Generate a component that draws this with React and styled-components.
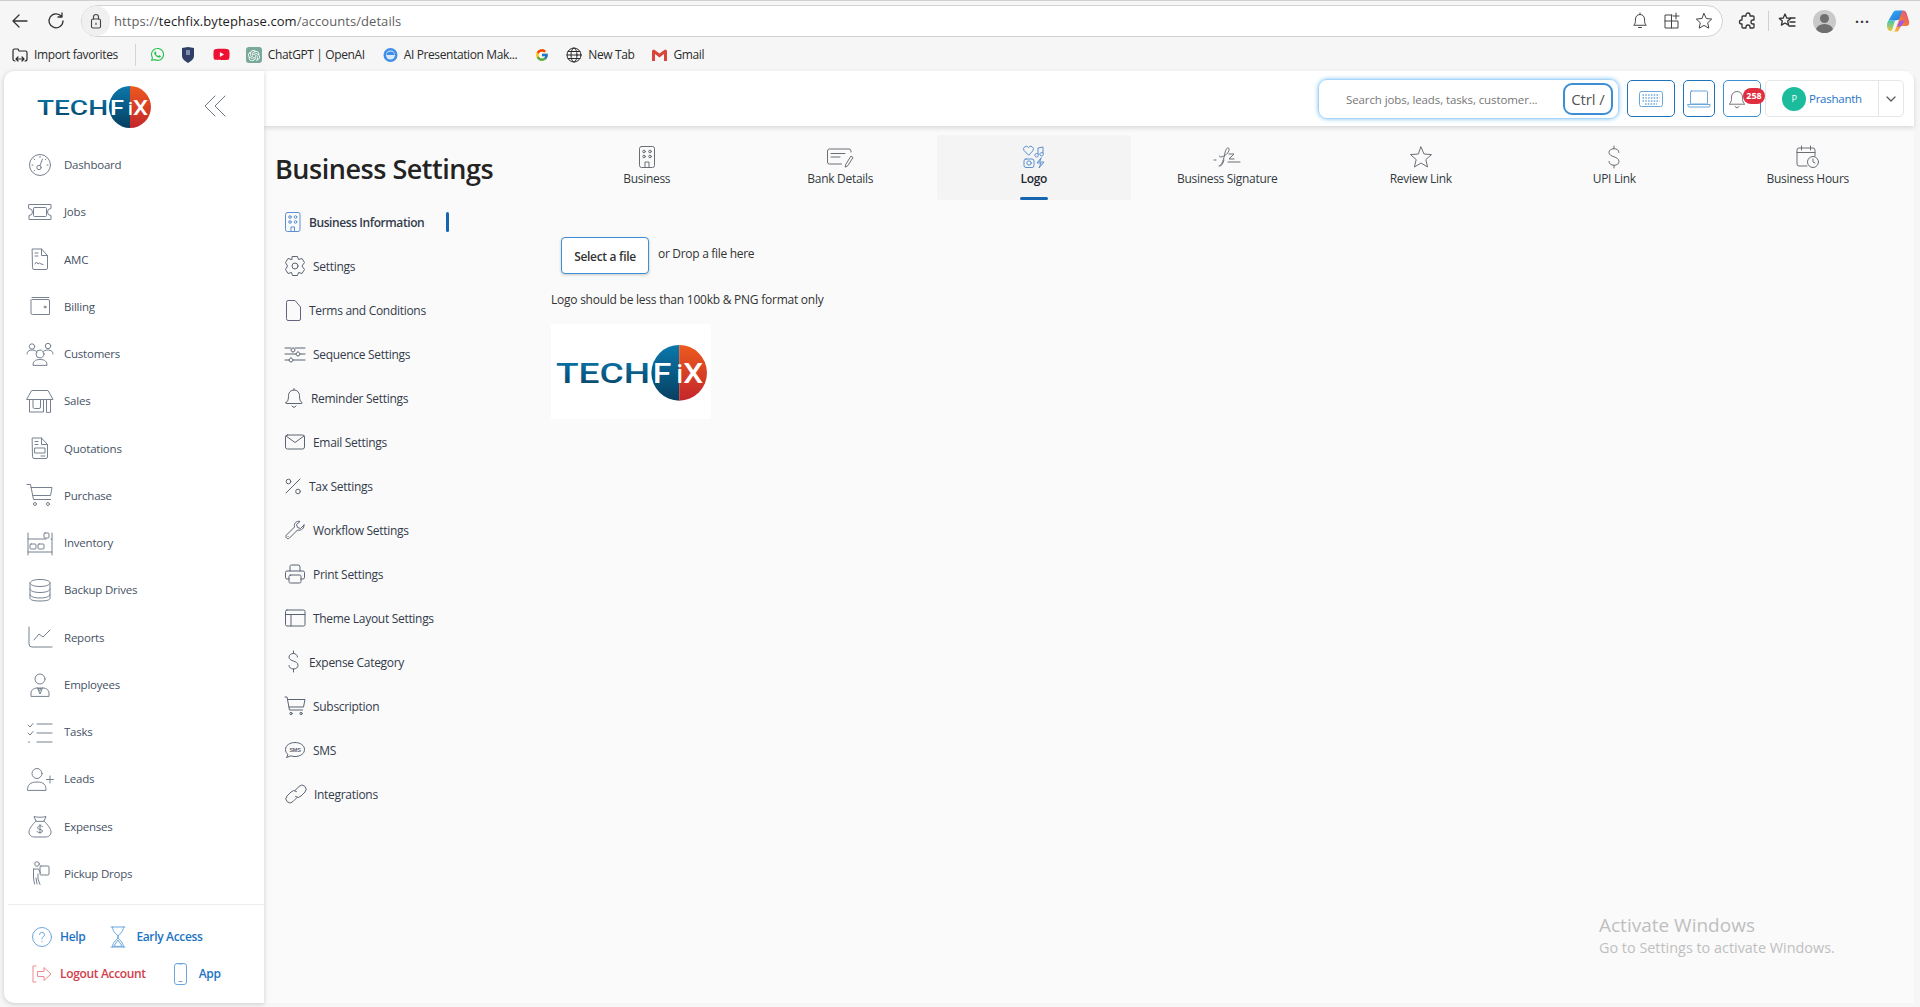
import React from "react";
import styled, { createGlobalStyle } from "styled-components";
import { FaWhatsapp, FaYoutube } from "react-icons/fa";
import { FcGoogle } from "react-icons/fc";
import { SiOpenai } from "react-icons/si";

const GlobalStyle = createGlobalStyle`
  html, body { margin: 0; padding: 0; background: #f6f6f6; }
  body { font-family: "Open Sans", "Noto Sans", sans-serif; overflow: hidden; }
  * { box-sizing: border-box; }
`;

const Page = styled.div`
  position: relative;
  width: 1920px;
  height: 1007px;
  display: flex;
  flex-direction: column;
  background: #f6f6f6;
`;

/* browser chrome */
const Chrome = styled.div`
  height: 71px;
  flex: none;
  border-top: 1px solid #cfcfcf;
  display: flex;
  flex-direction: column;
`;

const ToolRow = styled.div`
  height: 39px;
  flex: none;
  display: flex;
  align-items: center;
  padding: 1px 0 0 2px;
`;

const NavBtn = styled.div`
  width: 36px;
  display: flex;
  justify-content: center;
  color: #333;
`;

const AddressBar = styled.div`
  width: 1642px;
  height: 32px;
  margin-left: 7px;
  background: #fff;
  border: 1px solid #d2d2d2;
  border-radius: 16px;
  display: flex;
  align-items: center;
`;

const LockWrap = styled.div`
  width: 28px;
  height: 30px;
  border-radius: 15px;
  background: #f0f0f0;
  color: #444;
  display: flex;
  align-items: center;
  justify-content: center;
  margin-right: 4px;
`;

const Url = styled.span`
  font-size: 13px;
  letter-spacing: 0.06px;
  color: #5f5f5f;
  b { font-weight: 400; color: #1d1d1d; }
`;

const AddressIcons = styled.div`
  margin-left: auto;
  display: flex;
  gap: 14px;
  padding-right: 9px;
  color: #444;
`;

const RightIcons = styled.div`
  display: flex;
  align-items: center;
  color: #333;
  margin-left: 16px;
`;

const ToolSep = styled.div`
  width: 1px;
  height: 20px;
  background: #d0d0d0;
  margin: 0 9px 0 11px;
`;

const ProfileDot = styled.div`
  width: 23px;
  height: 23px;
  border-radius: 50%;
  background: #c9c9c9;
  margin: 0 19px 0 17px;
  position: relative;
  overflow: hidden;
  &::before {
    content: "";
    position: absolute;
    left: 7px;
    top: 4px;
    width: 9px;
    height: 9px;
    border-radius: 50%;
    background: #6f6f6f;
  }
  &::after {
    content: "";
    position: absolute;
    left: 3px;
    top: 14px;
    width: 17px;
    height: 12px;
    border-radius: 50%;
    background: #6f6f6f;
  }
`;

const Dots = styled.span`
  width: 16px;
  font-size: 14px;
  font-weight: 700;
  letter-spacing: 1px;
  line-height: 8px;
  height: 14px;
  margin-right: 15px;
  color: #333;
`;

const BookmarkRow = styled.div`
  height: 29px;
  flex: none;
  display: flex;
  align-items: center;
  padding-left: 12px;
`;

const Bookmark = styled.div`
  display: flex;
  align-items: center;
  gap: 6px;
  font-size: 12px;
  letter-spacing: -0.38px;
  color: #2b2b2b;
  margin-right: ${(p) => p.$mr ?? 18}px;
`;

const BookmarkSep = styled.div`
  width: 1px;
  height: 22px;
  background: #d4d4d4;
  margin: 0 14px 0 0;
`;

/* app shell */
const Shell = styled.div`
  height: 932px;
  display: flex;
  padding: 0 6px 0 4px;
`;

const Sidebar = styled.aside`
  width: 260px;
  flex: none;
  background: #fff;
  border-radius: 10px 0 0 10px;
  box-shadow: 0 1px 5px rgba(0, 0, 0, 0.18);
  display: flex;
  flex-direction: column;
  position: relative;
  z-index: 2;
`;

const LogoRow = styled.div`
  height: 70px;
  flex: none;
  display: flex;
  align-items: center;
  padding: 2px 0 0 33px;
`;

const Collapse = styled.div`
  margin: -3px 0 0 53px;
  color: #6b7785;
  display: flex;
`;

const NavList = styled.nav`
  display: flex;
  flex-direction: column;
  padding-left: 22px;
`;

const NavItem = styled.div`
  height: 47.25px;
  display: flex;
  align-items: center;
  gap: 10px;
  font-size: 11.5px;
  letter-spacing: -0.22px;
  color: #465265;
`;

const IconBox = styled.span`
  width: ${(p) => p.$w || 28}px;
  height: ${(p) => p.$h || 24}px;
  flex: none;
  display: flex;
  align-items: center;
  justify-content: center;
  color: ${(p) => p.$color || "inherit"};
`;

const SideFooter = styled.div`
  margin: 7px 0 0 4px;
  border-top: 1px solid #ececec;
  padding: 19px 0 0 24px;
  display: flex;
  flex-direction: column;
  gap: 12px;
`;

const FooterRow = styled.div`
  display: flex;
  align-items: center;
  gap: ${(p) => p.$gap}px;
  height: 25px;
`;

const FooterLink = styled.div`
  display: flex;
  align-items: center;
  gap: ${(p) => p.$gap || 8}px;
  font-size: 12px;
  font-weight: 600;
  letter-spacing: -0.34px;
  color: ${(p) => (p.$danger ? "#d2404b" : "#1b73c4")};
`;

const Main = styled.main`
  flex: 1;
  background: #fafafa;
  display: flex;
  flex-direction: column;
  min-width: 0;
`;

const Header = styled.header`
  height: 55px;
  flex: none;
  background: #fff;
  border-radius: 0 10px 0 0;
  box-shadow: 0 2px 5px rgba(0, 0, 0, 0.14);
  display: flex;
  align-items: flex-start;
  justify-content: flex-end;
  padding: 8px 10px 0 0;
  position: relative;
  z-index: 1;
`;

const SearchBox = styled.div`
  width: 301px;
  height: 40px;
  border: 1px solid #a8d5f7;
  box-shadow: 0 0 4px #7fc3f5;
  border-radius: 9px;
  display: flex;
  align-items: center;
  justify-content: space-between;
  padding: 0 5px 0 27px;
  margin-right: 8px;
  font-size: 11.5px;
  letter-spacing: -0.1px;
  color: #777;
`;

const CtrlKey = styled.div`
  width: 50px;
  height: 32px;
  border: 2px solid #3c8fd4;
  border-radius: 9px;
  display: flex;
  align-items: center;
  justify-content: center;
  font-size: 15px;
  color: #555;
`;

const HeadBtn = styled.div`
  position: relative;
  width: ${(p) => p.$w}px;
  height: 37px;
  margin: 1px 8px 0 0;
  border: 1px solid ${(p) => p.$line || "#1f72b8"};
  border-radius: 5px;
  display: flex;
  align-items: center;
  justify-content: center;
  color: ${(p) => p.$icon || "#6ba6da"};
`;

const BellGlyph = styled.span`
  display: flex;
  margin-right: 10px;
`;

const Badge = styled.span`
  position: absolute;
  left: 19px;
  top: 7px;
  width: 22px;
  height: 16px;
  border-radius: 8px;
  background: #df2e3f;
  color: #fff;
  font-size: 9px;
  font-weight: 700;
  line-height: 16px;
  text-align: center;
`;

const UserBox = styled.div`
  width: 139px;
  height: 37px;
  margin: 1px 0 0 -4px;
  border: 1px solid #e6e6e6;
  border-radius: 5px;
  display: flex;
  align-items: center;
`;

const UserName = styled.div`
  width: 113px;
  height: 100%;
  display: flex;
  align-items: center;
  gap: 3px;
  padding-left: 16px;
  font-size: 11.5px;
  letter-spacing: -0.25px;
  color: #1f73c5;
  border-right: 1px solid #e6e6e6;
`;

const Avatar = styled.span`
  width: 24px;
  height: 24px;
  border-radius: 50%;
  background: #1abc9c;
  color: #fff;
  font-size: 9px;
  display: flex;
  align-items: center;
  justify-content: center;
`;

const Chevron = styled.div`
  flex: 1;
  display: flex;
  justify-content: center;
  color: #555;
`;

const Body = styled.div`
  flex: 1;
  display: flex;
  min-height: 0;
`;

const SettingsCol = styled.div`
  width: 286px;
  flex: none;
  padding: 24px 0 0 11px;
`;

const Title = styled.h1`
  margin: 0 0 12px;
  font-size: 27px;
  line-height: 38px;
  font-weight: 600;
  letter-spacing: -0.47px;
  color: #232323;
`;

const SettingsList = styled.div`
  display: flex;
  flex-direction: column;
`;

const SettingsItem = styled.div`
  height: 44px;
  width: 174px;
  padding-left: ${(p) => p.$pl ?? 10}px;
  display: flex;
  align-items: center;
  gap: 8px;
  font-size: 12px;
  letter-spacing: ${(p) => (p.$active ? "-0.42px" : "-0.3px")};
  white-space: nowrap;
  font-weight: ${(p) => (p.$active ? 600 : 400)};
  color: #333a4a;
`;

const ActiveBar = styled.span`
  margin-left: auto;
  width: 3px;
  height: 20px;
  border-radius: 2px;
  background: #1565b0;
`;

const Content = styled.section`
  flex: 1;
  min-width: 0;
  padding-top: 9px;
`;

const Tabs = styled.div`
  display: grid;
  grid-template-columns: repeat(7, 193.5px);
  height: 65px;
`;

const Tab = styled.div`
  position: relative;
  display: flex;
  flex-direction: column;
  align-items: center;
  padding-top: 11px;
  gap: 2px;
  font-size: 12px;
  letter-spacing: -0.3px;
  border-radius: 3px;
  color: ${(p) => (p.$active ? "#1f2733" : "#333a40")};
  background: ${(p) => (p.$active ? "#f4f4f4" : "transparent")};
  font-weight: ${(p) => (p.$active ? 600 : 400)};
  &::after {
    content: "";
    display: ${(p) => (p.$active ? "block" : "none")};
    position: absolute;
    bottom: 0;
    left: 50%;
    width: 28px;
    margin-left: -14px;
    height: 3px;
    border-radius: 2px;
    background: #1565b0;
  }
`;

const Panel = styled.div`
  padding: 37px 0 0 1px;
`;

const UploadRow = styled.div`
  display: flex;
  align-items: flex-start;
  padding-left: 10px;
  gap: 9px;
`;

const SelectBtn = styled.div`
  width: 88px;
  height: 37px;
  background: #fff;
  border: 1px solid #3c8fd4;
  border-radius: 4px;
  box-shadow: 0 1px 3px rgba(0, 0, 0, 0.2);
  display: flex;
  align-items: center;
  justify-content: center;
  font-size: 12px;
  font-weight: 600;
  letter-spacing: -0.3px;
  color: #333;
  padding-top: 1px;
`;

const DropText = styled.span`
  font-size: 12px;
  line-height: 33px;
  letter-spacing: -0.3px;
  color: #333;
`;

const Hint = styled.p`
  margin: 17px 0 15px;
  font-size: 12px;
  line-height: 18px;
  letter-spacing: -0.24px;
  color: #333;
`;

const LogoPreview = styled.div`
  width: 160px;
  height: 95px;
  background: #fff;
  display: flex;
  align-items: center;
  padding: 3px 0 0 5px;
`;

const Watermark = styled.div`
  position: absolute;
  left: 1599px;
  top: 912px;
  color: #bfbfbf;
  font-size: 14.4px;
  line-height: 20px;
  div:first-child {
    font-size: 19px;
    line-height: 26px;
  }
`;

const Line = styled.svg`
  fill: none;
  stroke: currentColor;
  stroke-width: ${(p) => p.$sw || 1};
  stroke-linecap: round;
  stroke-linejoin: round;
  display: block;
  overflow: visible;
`;

const Ico = ({ w = 28, h = 24, sw, dy = 0, children }) => (
  <Line width={w} height={h} viewBox={`0 ${-dy} ${w} ${h}`} $sw={sw}>
    {children}
  </Line>
);

function Logo({ width }) {
  const id = `lg${width}`;
  const font = "Roboto, Liberation Sans, sans-serif";
  return (
    <svg width={width} height={(width * 42) / 114} viewBox="0 0 114 42" style={{ display: "block", flex: "none" }}>
      <defs>
        <linearGradient id={`${id}b`} x1="0" y1="0" x2="0" y2="1">
          <stop offset="0" stopColor="#0b78ad" />
          <stop offset="1" stopColor="#063f5f" />
        </linearGradient>
        <linearGradient id={`${id}o`} x1="0" y1="0" x2="0" y2="1">
          <stop offset="0" stopColor="#ec5a1e" />
          <stop offset="1" stopColor="#c4262c" />
        </linearGradient>
      </defs>
      <path d="M93 0a21 21 0 0 0 0 42z" fill={`url(#${id}b)`} />
      <path d="M93 0a21 21 0 0 1 0 42z" fill={`url(#${id}o)`} />
      <text x="0" y="29" fontFamily={font} fontWeight="500" fontSize="21" textLength="71" lengthAdjust="spacingAndGlyphs" fill={`url(#${id}b)`}>TECH</text>
      <text x="73" y="29" fontFamily={font} fontWeight="500" fontSize="21" textLength="14" lengthAdjust="spacingAndGlyphs" fill="#fff">F</text>
      <text x="91" y="29" fontFamily={font} fontWeight="500" fontSize="19" fill="#fff">i</text>
      <text x="96" y="29" fontFamily={font} fontWeight="500" fontSize="21" textLength="15" lengthAdjust="spacingAndGlyphs" fill="#fff">X</text>
    </svg>
  );
}

function Copilot() {
  return (
    <svg width="24" height="24" viewBox="0 0 24 24">
      <defs>
        <linearGradient id="cp1" x1="0" y1="0" x2="1" y2="1">
          <stop offset="0" stopColor="#2bb5ef" />
          <stop offset="1" stopColor="#2c6fe0" />
        </linearGradient>
        <linearGradient id="cp2" x1="0" y1="1" x2="1" y2="0">
          <stop offset="0" stopColor="#f6c343" />
          <stop offset=".55" stopColor="#f0793a" />
          <stop offset="1" stopColor="#e0489a" />
        </linearGradient>
        <linearGradient id="cp3" x1="0" y1="0" x2="0" y2="1">
          <stop offset="0" stopColor="#38c9b0" />
          <stop offset="1" stopColor="#f0c83c" />
        </linearGradient>
      </defs>
      <path d="M7 3.500c1-1.500 2-2 4-2h6l-3 9-5 1H2.500z" fill="url(#cp1)" />
      <path d="M2.500 11.500H9L6.500 20c-.5 1.800-1.500 2.500-3 2C1.500 21 .8 18.500 1 16c.1-1.800.6-3.200 1.500-4.500z" fill="url(#cp3)" />
      <path d="M17 1.500c2 0 3 1 3.700 3L23 12c.8 3-.6 5-3 5h-5l-3 5.500H6.500c2 0 2.700-1 3.300-3L15 5c.5-1.500 1-2.500 2-3.500z" fill="url(#cp2)" />
      <path d="M14 11.500h5l-4 6h-4z" fill="#a855e8" />
    </svg>
  );
}

const D = {
  dashboard: <><circle cx="14" cy="12" r="10.500" /><path d="M14 3.500v1M6 12h1M21 12h1M8 6l.7.7M20 6l-.7.700M8 18l.7-.7" /><circle cx="13" cy="14.500" r="2.200" /><path d="M14 12.500l2.500-6.500" /></>,
  jobs: <><path d="M3 4.500h22v4a3.500 3.500 0 0 0 0 7v4H3v-4a3.500 3.500 0 0 0 0-7z" /><rect x="7.500" y="7.500" width="13" height="9" rx="1" /></>,
  amc: <><path d="M6.500 2h9l6 6.500V21a1.500 1.500 0 0 1-1.500 1.500H8A1.500 1.500 0 0 1 6.500 21z" /><path d="M15.500 2v6.500h6M9 6h3M9 9h3M9 17l1.500-2 1.500 2 1.500-1 1.500 1 2 .5" /></>,
  billing: <><path d="M5 5.500v13.500a1.500 1.500 0 0 0 1.500 1.500H23.500V7a1.500 1.500 0 0 0-1.500-1.500H6.500M6 3.500h17" /><circle cx="19" cy="13" r="1" /></>,
  customers: <><circle cx="14" cy="12" r="4" /><path d="M7 23c0-3.500 2-5.500 7-5.500s7 2 7 5.500z" /><circle cx="6" cy="4.500" r="2.700" /><circle cx="22" cy="4" r="2.700" /><path d="M1 12c0-2.500 2-4 5-4s4 1 5 2M27 12c0-2.500-2-4-5-4s-4 1-5 2" /></>,
  sales: <><path d="M6 1.500h16l5 9H1z" /><path d="M3.500 10.500V23h14V10.500M7 10.500v7.500a1.500 1.500 0 0 0 1.500 1.500h4.500a1.500 1.500 0 0 0 1.500-1.500v-7.500M20.500 23V10.500h4V23z" /></>,
  quote: <><path d="M6.500 2h9l6 6.500V21a1.500 1.500 0 0 1-1.500 1.500H8A1.500 1.500 0 0 1 6.500 21z" /><path d="M15.500 2v6.500h6M9 5.500h3M9 8.500h3M9 12h10v5H9zM15 20h4" /></>,
  purchase: <><path d="M1 1.500h3.500l3 15h17M5 4.500h21l-1.500 8H7" /><circle cx="9" cy="21" r="1.500" /><circle cx="22" cy="21" r="1.500" /></>,
  inventory: <><path d="M2 2v22M26 2v22M2 21h24M2 8h18M25 8h1" /><rect x="4" y="13" width="6" height="5" rx="1" /><rect x="12" y="13" width="6" height="5" rx="1" /><rect x="18" y="2" width="5" height="5" rx="1" /></>,
  backup: <><path d="M4 5c0-2 4-3.500 10-3.500S24 3 24 5v15.500c0 1.500-4 2.500-10 2.500S4 22 4 20.500z" /><path d="M4 5c0 2 4 3.500 10 3.500S24 7 24 5M4 11c0 2 4 3.500 10 3.500S24 13 24 11M4 16.500c0 2 4 3.500 10 3.500s10-1.500 10-3.500" /></>,
  reports: <><path d="M3 2v17a3 3 0 0 0 3 3h20" /><path d="M8 15l5-6 4 3 7-7" /></>,
  employees: <><circle cx="14" cy="7" r="5" /><path d="M5 24v-3c0-3 3-5 6-5h6c3 0 6 2 6 5v3zM11.500 16l2.500 6 2.500-6M12.500 16.500h3l-1.500 2z" /></>,
  tasks: <><path d="M2 5l2 2 3-3.500M2 13l2 2 3-3.500M2.500 22h1M11 4h15M11 13h15M11 22h15" /></>,
  leads: <><circle cx="11" cy="6.500" r="5" /><path d="M1.500 23c0-5 2.500-8 9.500-8s9 3 9 8zM24 9v7M20.500 12.500h7" /></>,
  expenses: <><path d="M10 7L8 2.500c3 1 9 1 12 0L18 7zM10 7C6 11 3 15 3 18c0 3 2 5 6 5h10c4 0 6-2 6-5 0-3-3-7-7-11" /><path d="M16.500 12.500c-1-1-5-1-5 1.200 0 2.300 5 1 5 3.300 0 2-4 2-5.500.7M14 10.500v9" /></>,
  pickup: <><circle cx="11" cy="3" r="2.300" /><rect x="14" y="5" width="9" height="9" rx="1" /><path d="M7.500 8h5l2 4M7.500 8v9l1 6M12 13v5l2 5.500M10 17l1 6" /></>,
};

const navItems = [
  ["Dashboard", "dashboard"], ["Jobs", "jobs"], ["AMC", "amc"], ["Billing", "billing"],
  ["Customers", "customers"], ["Sales", "sales"], ["Quotations", "quote"], ["Purchase", "purchase"],
  ["Inventory", "inventory"], ["Backup Drives", "backup"], ["Reports", "reports"], ["Employees", "employees"],
  ["Tasks", "tasks"], ["Leads", "leads"], ["Expenses", "expenses"], ["Pickup Drops", "pickup"],
];

const settingsItems = [
  { label: "Business Information", w: 16, color: "#5b8fcf", active: true, d: <><rect x=".5" y="1.500" width="14.500" height="19" rx="2" /><circle cx="5" cy="6" r="1.300" /><circle cx="10.500" cy="6" r="1.300" /><circle cx="5" cy="11" r="1.300" /><circle cx="10.500" cy="11" r="1.300" /><path d="M6 20.500V16h3.500v4.500" /></> },
  { label: "Settings", w: 20, dy: 1, d: <><path d="M7.500 .5h5l1 3 3.500-1 2.500 4-2.500 3.500 2.500 3.500-2.500 4-3.500-1-1 3h-5l-1-3-3.500 1-2.500-4L2.500 10 .5 6.500l2.500-4 3.500 1z" /><circle cx="10" cy="10" r="3" /></> },
  { label: "Terms and Conditions", w: 16, color: "#6a6080", d: <path d="M1.500 3a1.500 1.500 0 0 1 1.500-1.500H10L15.500 8v12a1.500 1.500 0 0 1-1.500 1.500H3A1.500 1.500 0 0 1 1.500 20z" /> },
  { label: "Sequence Settings", w: 20, dy: 1.500, d: <path d="M0 3.500h6M10 3.500h10M0 9.500h11M15 9.500h5M0 15.500h4M8 15.500h12M8 3.500a2 2 0 1 0 .01 0M13 7.500a2 2 0 1 0 .01 0M6 13.500a2 2 0 1 0 .01 0" /> },
  { label: "Reminder Settings", w: 18, dy: .5, d: <path d="M1 15c2-1 2.500-3 2.500-7a5.500 5.500 0 0 1 11 0c0 4 .5 6 2.500 7 .5.500 0 1-.5 1H1.500c-.5 0-1-.5-.5-1zM7 18.500l2 1.500 2-1.500M9 1V2.500" /> },
  { label: "Email Settings", w: 20, dy: 2.500, d: <><rect x=".5" y="1.500" width="19" height="14" rx="2" /><path d="M1 2.500L10 9l9-6.500" /></> },
  { label: "Tax Settings", w: 16, dy: 3, d: <><path d="M1 15L15 1" /><circle cx="3.500" cy="3.500" r="2.300" /><circle cx="13" cy="13.500" r="2.300" /></> },
  { label: "Workflow Settings", w: 20, dy: 1.500, d: <path d="M19 4.500l-3.500 3.500-3-1-1-3L15 1c-3-1-6.500 1.500-5.500 5.500L1.500 14.500c-2 2 1 5 3 3l8-8c4 1 7-2 6.500-5zM3 16h.1" /> },
  { label: "Print Settings", w: 20, dy: 1, d: <><path d="M5 7V2.500A1.500 1.500 0 0 1 6.500 1H13a2 2 0 0 1 2 2v4" /><path d="M4 15H2a1.500 1.500 0 0 1-1.500-1.500v-5A1.500 1.500 0 0 1 2 7h16a1.500 1.500 0 0 1 1.500 1.500v5A1.500 1.500 0 0 1 18 15h-2" /><rect x="4" y="11" width="12" height="8" rx="1.500" /></> },
  { label: "Theme Layout Settings", w: 20, dy: 2, d: <><rect x=".5" y="1" width="19.500" height="16" rx="1.500" /><path d="M.5 5.500h19.500M6 5.500V17" /></> },
  { label: "Expense Category", w: 16, d: <path d="M12.500 6c0-2-2-3.500-4-3.500-2.500 0-4.500 1.500-4.500 3.500 0 5 9 3 9 8.500 0 2-2 3.500-4.500 3.500s-4.500-1.500-4.500-3.500M8.500 0v2.500M8.500 18v3" /> },
  { label: "Subscription", w: 20, dy: 1.500, d: <><path d="M0 .5h2l2.500 13h13M3 3h17l-1.500 7.500H4" /><circle cx="6" cy="17" r="1.200" /><circle cx="16" cy="17" r="1.200" /></> },
  { label: "SMS", w: 20, dy: 1.500, d: <><path d="M10 2c5.500 0 9.500 3 9.500 7s-4 7-9.500 7c-1.500 0-3-.2-4-.7L1.500 17l1.500-3C1.500 13 .5 11 .5 9c0-4 4-7 9.500-7z" /><text x="10" y="11" fontSize="5.500" fontWeight="700" textAnchor="middle" fill="currentColor" stroke="none" fontFamily="Liberation Sans, sans-serif">SMS</text></> },
  { label: "Integrations", w: 20, pl: 11, dy: 1, d: <path d="M9 6.500l4-4a4 4 0 0 1 6 5.500l-4 4a4 4 0 0 1-5.500.5M11 13.500l-4 4a4 4 0 0 1-6-5.500l4-4a4 4 0 0 1 5.500-.5" /> },
];

const tabs = [
  { label: "Business", w: 16, h: 22, d: <><rect x=".5" y=".5" width="15" height="21" rx="2" /><circle cx="5" cy="5.500" r="1.300" /><circle cx="11" cy="5.500" r="1.300" /><circle cx="5" cy="10.500" r="1.300" /><circle cx="11" cy="10.500" r="1.300" /><path d="M6 21.500V16h4v5.500" /></> },
  { label: "Bank Details", w: 26, h: 22, d: <><path d="M24 6V5a2 2 0 0 0-2-2H2.500a2 2 0 0 0-2 2v11a2 2 0 0 0 2 2h12" /><path d="M4 7.500h14M4 11h9M19 18l5-8 2 1.500-5 8-2.500 1.500z" /></> },
  { label: "Logo", w: 22, h: 22, active: true, color: "#5b8fcf", d: <><path d="M5.500 9L1 4.500a2.500 2.500 0 0 1 4.500-3 2.500 2.500 0 0 1 4.500 3z" /><path d="M15 8V2l5-1v6M15 8a1.800 1.800 0 1 1-.1-.1M20 7a1.800 1.800 0 1 1-.1-.1" /><rect x="1" y="13" width="10" height="8.500" rx="2" /><circle cx="6" cy="17" r="2.200" /><path d="M18 12l-4 5h4l-2 5 5-6h-4z" /></> },
  { label: "Business Signature", w: 26, h: 22, d: <><path d="M5 20c3 0 5-8 6-13 .5-3 2-6 3.500-5s0 5-3 7c-3 2-6 3-6 1M10 14c-1 3-2 6-4 6M0 14h2" /><path d="M15 8h5l-5 5h5M14 16h12" /></> },
  { label: "Review Link", w: 22, h: 22, d: <path d="M11 1l3 7 7.500.6-5.700 5 1.800 7.400L11 17l-6.600 4 1.800-7.400-5.700-5L8 8z" /> },
  { label: "UPI Link", w: 14, h: 22, d: <path d="M12 6.500c0-2.300-2.200-3.800-5-3.800S2 4.200 2 6.500c0 5 10 3.500 10 9 0 2.300-2.200 3.800-5 3.800s-5-1.500-5-3.800M7 0v2.700M7 19.300V22" /> },
  { label: "Business Hours", w: 24, h: 22, d: <><path d="M11 20H3a2 2 0 0 1-2-2V4a2 2 0 0 1 2-2h14a2 2 0 0 1 2 2v6M1 6.500h18M5.500 0v4M14.500 0v4" /><circle cx="17" cy="16" r="5.500" /><path d="M17 13v3l2 1" /></> },
];

const BellSmall = () => (
  <Ico w={16} h={18}>
    <path d="M2 13c1-1 1.500-2 1.500-6a4.500 4.500 0 0 1 9 0c0 4 .5 5 1.500 6zM6.500 15.500h3M8 1v1.500" />
  </Ico>
);

function BrowserBar() {
  return (
    <Chrome>
      <ToolRow>
        <NavBtn>
          <Ico w={18} h={18} sw={1.3}><path d="M16 9H2M8 3L2 9l6 6" /></Ico>
        </NavBtn>
        <NavBtn>
          <Ico w={18} h={18} sw={1.3}><path d="M14.500 4.500A7 7 0 1 0 16 9M15 1v4h-4" /></Ico>
        </NavBtn>
        <AddressBar>
          <LockWrap>
            <Ico w={12} h={16} sw={1.1}><rect x="1.500" y="6" width="9" height="9" rx="1.500" /><path d="M3.500 6V4a2.500 2.500 0 0 1 5 0v2M6 10v1.500" /></Ico>
          </LockWrap>
          <Url>https://<b>techfix.bytephase.com</b>/accounts/details</Url>
          <AddressIcons>
            <IconBox $w={18} $h={18}><BellSmall /></IconBox>
            <IconBox $w={18} $h={18}>
              <Ico w={18} h={18}><path d="M9 3H2v13h13V9H2M8.500 3v13M13 1v6M10 4h6" /></Ico>
            </IconBox>
            <IconBox $w={18} $h={18}>
              <Ico w={18} h={18}><path d="M9 1.500l2.300 5 5.400.6-4 3.700 1.100 5.400L9 13.400 4.200 16.200l1.100-5.400-4-3.700 5.400-.6z" /></Ico>
            </IconBox>
          </AddressIcons>
        </AddressBar>
        <RightIcons>
          <Ico w={18} h={18} sw={1.3}><path d="M7 3a2 2 0 0 1 4 0v1h3a1 1 0 0 1 1 1v3h-1a2 2 0 0 0 0 4h1v3a1 1 0 0 1-1 1h-3v-1a2 2 0 0 0-4 0v1H4a1 1 0 0 1-1-1v-3h-.5a2 2 0 0 1 0-4H3V5a1 1 0 0 1 1-1h3z" /></Ico>
          <ToolSep />
          <Ico w={18} h={18} sw={1.3}><path d="M7 2l1.700 4 4 .4-3 2.700.9 4L7 11l-3.600 2.100.9-4-3-2.700 4-.4zM12 6h5M12 10h5M11 14h6" /></Ico>
          <ProfileDot />
          <Dots>...</Dots>
          <Copilot />
        </RightIcons>
      </ToolRow>
      <BookmarkRow>
        <Bookmark $mr={17}>
          <Ico w={16} h={16} sw={1.2}><path d="M3 14a2 2 0 0 1-2-2V3.500A1.500 1.500 0 0 1 2.500 2H6l1 2h6.500A1.500 1.500 0 0 1 15 5.500V12a2 2 0 0 1-2 2M4 12h8M6 10l-2 2 2 2M10 10l2 2-2 2" /></Ico>
          Import favorites
        </Bookmark>
        <BookmarkSep />
        <Bookmark $mr={17}><FaWhatsapp size={15} color="#27c04f" /></Bookmark>
        <Bookmark $mr={19}>
          <svg width="12" height="16" viewBox="0 0 12 16"><path d="M0 1l6-1 6 1v8c0 3-3 5-6 7-3-2-6-4-6-7z" fill="#2f3f68" /><path d="M4 3h4v5H4z" fill="#7f8cb0" /></svg>
        </Bookmark>
        <Bookmark $mr={16}><FaYoutube size={17} color="#ee0f33" /></Bookmark>
        <Bookmark>
          <svg width="16" height="16" viewBox="0 0 16 16"><rect width="16" height="16" rx="3" fill="#79a99a" /><foreignObject x="2" y="2" width="12" height="12"><SiOpenai size={12} color="#fff" /></foreignObject></svg>
          ChatGPT | OpenAI
        </Bookmark>
        <Bookmark>
          <svg width="15" height="16" viewBox="0 0 15 16"><circle cx="7.500" cy="8" r="7" fill="#3f8ee8" /><circle cx="7.500" cy="8" r="4.500" fill="#dbe9fb" /><path d="M3.500 8a4 3.500 0 0 1 8 0z" fill="#3f8ee8" /></svg>
          AI Presentation Mak...
        </Bookmark>
        <Bookmark $mr={17}><FcGoogle size={14} /></Bookmark>
        <Bookmark>
          <Ico w={16} h={16}><circle cx="8" cy="8" r="7" /><ellipse cx="8" cy="8" rx="3" ry="7" /><path d="M1 8h14M2 4.500h12M2 11.500h12" /></Ico>
          New Tab
        </Bookmark>
        <Bookmark>
          <svg width="15" height="12" viewBox="0 0 15 12"><path d="M0 1.500V12h3V5l4.500 3.500L12 5v7h3V1.500L13 .5 7.500 4.500 2 .5z" fill="#d9453a" /></svg>
          Gmail
        </Bookmark>
      </BookmarkRow>
    </Chrome>
  );
}

function SideNav() {
  return (
    <Sidebar>
      <LogoRow>
        <Logo width={114} />
        <Collapse>
          <Ico w={22} h={22}><path d="M11 1L1 11l10 10M21 1L11 11l10 10" /></Ico>
        </Collapse>
      </LogoRow>
      <NavList>
        {navItems.map(([label, key]) => (
          <NavItem key={label}>
            <IconBox $color="#77818f"><Ico>{D[key]}</Ico></IconBox>
            {label}
          </NavItem>
        ))}
      </NavList>
      <SideFooter>
        <FooterRow $gap={25}>
          <FooterLink>
            <IconBox $w={20} $h={22} $color="#6ca6de">
              <Ico w={20} h={20}><circle cx="10" cy="10" r="9.500" /><path d="M7.500 7.500a2.500 2.500 0 1 1 3.500 2.500c-.8.400-1 1-1 2M10 14.500v.3" /></Ico>
            </IconBox>
            Help
          </FooterLink>
          <FooterLink $gap={10}>
            <IconBox $w={16} $h={22} $color="#6ca6de">
              <Ico w={16} h={22}><path d="M1 1h14M1 21h14M2.500 1c0 6 5.500 7 5.500 10s-5.500 4-5.500 10M13.500 1c0 6-5.500 7-5.500 10s5.500 4 5.500 10M4 20l4-6 4 6z" /></Ico>
            </IconBox>
            Early Access
          </FooterLink>
        </FooterRow>
        <FooterRow $gap={28}>
          <FooterLink $danger>
            <IconBox $w={20} $h={20} $color="#ee8a8f">
              <Ico w={20} h={20}><path d="M4 2H1v16h3M6 7.500h6V3.500l7 6.500-7 6.500v-4H6z" /></Ico>
            </IconBox>
            Logout Account
          </FooterLink>
          <FooterLink $gap={12}>
            <IconBox $w={13} $h={22} $color="#6ca6de">
              <Ico w={13} h={22}><rect x=".5" y=".5" width="12" height="21" rx="2.500" /><path d="M5 1h3M5 18.500h3" /></Ico>
            </IconBox>
            App
          </FooterLink>
        </FooterRow>
      </SideFooter>
    </Sidebar>
  );
}

function TopBar() {
  return (
    <Header>
      <SearchBox>
        Search jobs, leads, tasks, customer...
        <CtrlKey>Ctrl /</CtrlKey>
      </SearchBox>
      <HeadBtn $w={48}>
        <Ico w={24} h={16}><rect x=".5" y=".5" width="23" height="15" rx="2" /><path d="M3.500 4h17M3.500 7h17M3.500 10h17M6 13h12" strokeDasharray="1.500 1.300" strokeWidth="1.500" strokeLinecap="butt" /></Ico>
      </HeadBtn>
      <HeadBtn $w={32}>
        <Ico w={24} h={18}><rect x="3.500" y="1" width="17" height="13" rx="1" /><path d="M1 14.500h22v1.500a1 1 0 0 1-1 1H2a1 1 0 0 1-1-1z" /></Ico>
      </HeadBtn>
      <HeadBtn $w={38} $line="#3b8fd0" $icon="#777">
        <BellGlyph>
          <Ico w={18} h={20}><path d="M1.500 15c1.500-1 2-3 2-7a5.500 5.500 0 0 1 11 0c0 4 .5 6 2 7zM7 17.500l2 1.500 2-1.500" /></Ico>
        </BellGlyph>
        <Badge>258</Badge>
      </HeadBtn>
      <UserBox>
        <UserName>
          <Avatar>P</Avatar>
          Prashanth
        </UserName>
        <Chevron>
          <Ico w={10} h={6} sw={1.2}><path d="M1 1l4 4 4-4" /></Ico>
        </Chevron>
      </UserBox>
    </Header>
  );
}

export default function App() {
  return (
    <>
      <GlobalStyle />
      <Page>
        <BrowserBar />
        <Shell>
          <SideNav />
          <Main>
            <TopBar />
            <Body>
              <SettingsCol>
                <Title>Business Settings</Title>
                <SettingsList>
                  {settingsItems.map((it) => (
                    <SettingsItem key={it.label} $active={it.active} $pl={it.pl}>
                      <IconBox $w={it.w} $h={22} $color={it.color || "#5b6472"}>
                        <Ico w={it.w} h={22} dy={it.dy}>{it.d}</Ico>
                      </IconBox>
                      {it.label}
                      {it.active && <ActiveBar />}
                    </SettingsItem>
                  ))}
                </SettingsList>
              </SettingsCol>
              <Content>
                <Tabs>
                  {tabs.map((t) => (
                    <Tab key={t.label} $active={t.active}>
                      <IconBox $w={t.w} $h={22} $color={t.color || "#6a6f76"}>
                        <Ico w={t.w} h={t.h}>{t.d}</Ico>
                      </IconBox>
                      {t.label}
                    </Tab>
                  ))}
                </Tabs>
                <Panel>
                  <UploadRow>
                    <SelectBtn>Select a file</SelectBtn>
                    <DropText>or Drop a file here</DropText>
                  </UploadRow>
                  <Hint>Logo should be less than 100kb &amp; PNG format only</Hint>
                  <LogoPreview>
                    <Logo width={151} />
                  </LogoPreview>
                </Panel>
              </Content>
            </Body>
          </Main>
        </Shell>
        <Watermark>
          <div>Activate Windows</div>
          <div>Go to Settings to activate Windows.</div>
        </Watermark>
      </Page>
    </>
  );
}
